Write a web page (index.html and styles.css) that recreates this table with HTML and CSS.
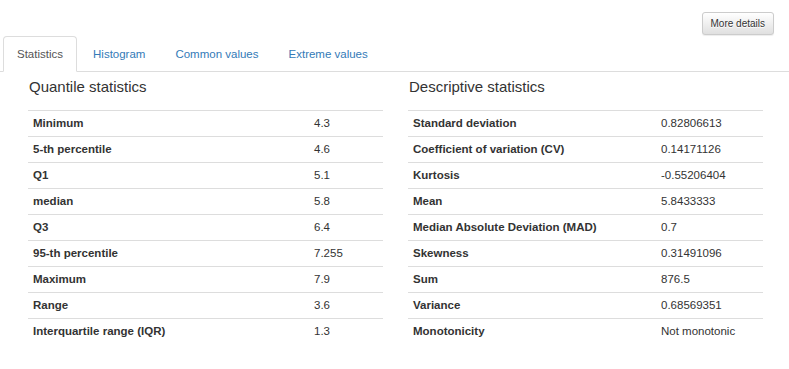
FILE: index.html
```html
<!DOCTYPE html>
<html>
<head>
<meta charset="utf-8">
<link rel="stylesheet" href="styles.css">
</head>
<body>
<div class="top">
  <button class="btn">More details</button>
</div>
<ul class="tabs">
  <li class="tab active"><a>Statistics</a></li>
  <li class="tab"><a>Histogram</a></li>
  <li class="tab"><a>Common values</a></li>
  <li class="tab"><a>Extreme values</a></li>
</ul>
<div class="content">
  <div class="col">
    <p class="heading">Quantile statistics</p>
    <table class="stats stats-q">
      <colgroup><col class="c1"><col></colgroup>
      <tr><th>Minimum</th><td>4.3</td></tr>
      <tr><th>5-th percentile</th><td>4.6</td></tr>
      <tr><th>Q1</th><td>5.1</td></tr>
      <tr><th>median</th><td>5.8</td></tr>
      <tr><th>Q3</th><td>6.4</td></tr>
      <tr><th>95-th percentile</th><td>7.255</td></tr>
      <tr><th>Maximum</th><td>7.9</td></tr>
      <tr><th>Range</th><td>3.6</td></tr>
      <tr><th>Interquartile range (IQR)</th><td>1.3</td></tr>
    </table>
  </div>
  <div class="col">
    <p class="heading">Descriptive statistics</p>
    <table class="stats stats-d">
      <colgroup><col class="c1"><col></colgroup>
      <tr><th>Standard deviation</th><td>0.82806613</td></tr>
      <tr><th>Coefficient of variation (CV)</th><td>0.14171126</td></tr>
      <tr><th>Kurtosis</th><td>-0.55206404</td></tr>
      <tr><th>Mean</th><td>5.8433333</td></tr>
      <tr><th>Median Absolute Deviation (MAD)</th><td>0.7</td></tr>
      <tr><th>Skewness</th><td>0.31491096</td></tr>
      <tr><th>Sum</th><td>876.5</td></tr>
      <tr><th>Variance</th><td>0.68569351</td></tr>
      <tr><th>Monotonicity</th><td>Not monotonic</td></tr>
    </table>
  </div>
</div>
</body>
</html>
```
FILE: styles.css
```css
html, body {
  margin: 0;
  padding: 0;
  background: #fff;
  font-family: "Liberation Sans", Arial, sans-serif;
  color: #333;
}

.top {
  height: 36px;
  box-sizing: border-box;
  padding: 12px 15px 0 0;
  display: flex;
  justify-content: flex-end;
  align-items: flex-start;
}

.btn {
  height: 23px;
  box-sizing: border-box;
  padding: 0 8px;
  font-family: "Liberation Sans", Arial, sans-serif;
  font-size: 10px;
  line-height: 21px;
  color: #333;
  border: 1px solid #ccc;
  border-radius: 3px;
  background-image: linear-gradient(to bottom, #fff 0, #e0e0e0 100%);
  text-shadow: 0 1px 0 #fff;
  box-shadow: inset 0 1px 0 rgba(255,255,255,.15), 0 1px 1px rgba(0,0,0,.075);
}

.tabs {
  list-style: none;
  margin: 0;
  padding: 0 0 0 3px;
  display: flex;
  border-bottom: 1px solid #ddd;
}

.tab {
  margin: 0 2px -1px 0;
}

.tab a {
  display: block;
  padding: 9px 13px;
  font-size: 11.5px;
  line-height: 16px;
  color: #337ab7;
  border: 1px solid transparent;
  border-radius: 4px 4px 0 0;
}

.tab.active a {
  color: #555;
  background: #fff;
  border-color: #ddd #ddd transparent;
}

.content {
  display: flex;
  gap: 25px;
  padding-left: 28px;
}

.col {
  width: 355px;
}

.heading {
  margin: 5px 0 13px 1px;
  font-size: 15px;
  line-height: 20px;
  font-weight: normal;
  color: #333;
}

.stats {
  width: 355px;
  border-collapse: collapse;
  table-layout: fixed;
  font-size: 11.5px;
  line-height: 17px;
}

.stats-q .c1 { width: 281px; }
.stats-d .c1 { width: 248px; }

.stats th,
.stats td {
  padding: 4px 5px;
  border-top: 1px solid #ddd;
  text-align: left;
  white-space: nowrap;
  color: #333;
}

.stats th {
  font-weight: bold;
}

.stats td {
  font-weight: normal;
}
```
